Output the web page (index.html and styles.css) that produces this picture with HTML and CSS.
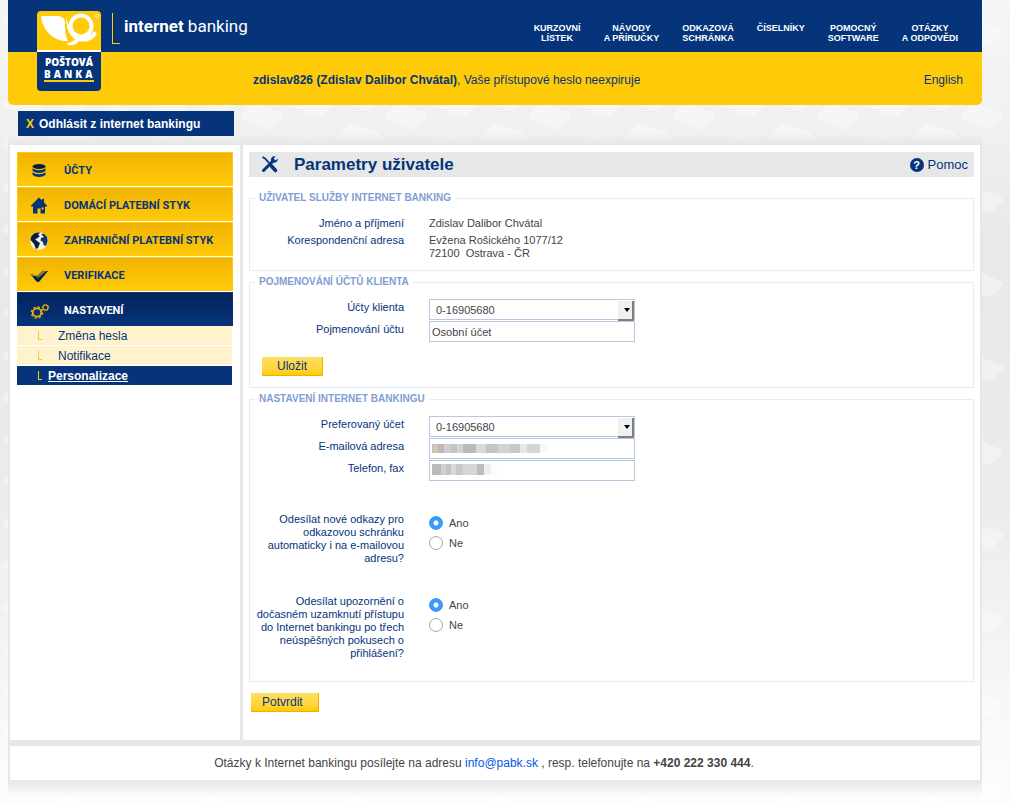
FILE: index.html
```html
<!DOCTYPE html>
<html lang="cs">
<head>
<meta charset="utf-8">
<title>Internet banking – Parametry uživatele</title>
<link rel="stylesheet" href="styles.css">
</head>
<body>
<svg class="backdrop" aria-hidden="true">
  <defs>
    <pattern id="tiles" width="144" height="84" patternUnits="userSpaceOnUse">
      <g fill="#fff" fill-opacity=".34">
        <rect x="-17" y="-10" width="34" height="20" rx="5" transform="translate(24 20) rotate(22) skewX(-24)"/>
        <rect x="-17" y="-10" width="34" height="20" rx="5" transform="translate(72 14) rotate(22) skewX(-24)"/>
        <rect x="-17" y="-10" width="34" height="20" rx="5" transform="translate(118 32) rotate(22) skewX(-24)"/>
        <rect x="-17" y="-10" width="34" height="20" rx="5" transform="translate(72 52) rotate(22) skewX(-24)"/>
        <rect x="-17" y="-10" width="34" height="20" rx="5" transform="translate(24 62) rotate(22) skewX(-24)"/>
      </g>
    </pattern>
  </defs>
  <rect width="100%" height="100%" fill="url(#tiles)"/>
</svg>

<div class="page">
  <header class="header">
    <div class="header-top">
      <p class="brand"><b>internet</b> banking</p>
      <nav class="top-nav">
        <a href="#">KURZOVNÍ<br>LÍSTEK</a>
        <a href="#">NÁVODY<br>A PŘÍRUČKY</a>
        <a href="#">ODKAZOVÁ<br>SCHRÁNKA</a>
        <a href="#">ČÍSELNÍKY</a>
        <a href="#">POMOCNÝ<br>SOFTWARE</a>
        <a href="#">OTÁZKY<br>A ODPOVĚDI</a>
      </nav>
    </div>
    <div class="header-user">
      <p><b>zdislav826 (Zdislav Dalibor Chvátal)</b>, Vaše přístupové heslo neexpiruje</p>
      <a href="#">English</a>
    </div>
    <a class="logo" href="#">
      <svg class="logo-horn" viewBox="0 0 64 39" aria-hidden="true">
        <path d="M4 5H20C24 5 27 7 28 10 28 17 28 24 31 30 17 31 5 19 4 5Z" fill="#fff"/>
        <circle cx="44" cy="15" r="10.500" fill="none" stroke="#fff" stroke-width="4"/>
        <path d="M29 5C31 16 36 25 44 25.500 50 26 54 24 57 20L60 23C56 29 51 31 44 30.500 36 30 31 22 29.500 14Z" fill="#fff"/>
        <path d="M28 6C29 14 29 20 33 26" fill="none" stroke="#ffca08" stroke-width="1.200"/>
        <path d="M30 32C34 32 36 30 38 28.500L42 30C39 34 35 35 31 34Z" fill="#fff"/>
        <circle cx="60" cy="5" r="1.600" fill="none" stroke="#fff" stroke-width=".8"/>
      </svg>
      <span class="logo-name">POŠTOVÁ</span>
      <span class="logo-sub">BANKA</span>
    </a>
  </header>

  <div class="logout-row">
    <a class="logout" href="#"><span class="logout-x">X</span><span>Odhlásit z internet bankingu</span></a>
  </div>

  <div class="frame">
    <aside class="sidebar">
      <nav class="menu">
        <a class="menu-item" href="#">
          <svg viewBox="0 0 20 20" aria-hidden="true"><g fill="#05347b"><ellipse cx="9" cy="5.500" rx="6.500" ry="2.500" fill="#061c40"/><path d="M2.500 7.300C5 9.900 13 9.900 15.500 7.300V9.500C14 12.700 4 12.700 2.500 9.500Z"/><path d="M2.500 11.300C5 13.900 13 13.900 15.500 11.300V13.500C14 16.700 4 16.700 2.500 13.500Z"/></g></svg>
          <span>ÚČTY</span>
        </a>
        <a class="menu-item" href="#">
          <svg viewBox="0 0 20 20" aria-hidden="true"><path d="M9 1.500L12 4.500V3H14V6.500L17 9.500V10.500H15V17.500H10.500V12.500H7.500V17.500H3V10.500H1V9.500Z" fill="#05347b"/><path d="M11.500 11.500h2v2h-2z" fill="#ffca08"/></svg>
          <span>DOMÁCÍ PLATEBNÍ STYK</span>
        </a>
        <a class="menu-item" href="#">
          <svg viewBox="0 0 20 20" aria-hidden="true"><circle cx="9" cy="10" r="8.800" fill="#f7f3df"/><path d="M1 6C3 2 7 1 10 1.500L8 4 10 5 7 7.500 5 8 7 10 10 12 8 17 6 18 4 13 .5 9Z" fill="#061c40"/><path d="M11 3L14 2.800 17 6 17.700 10 16 15 13.500 14 13 11 10.500 9.500 11 7 14 6Z" fill="#05347b"/></svg>
          <span>ZAHRANIČNÍ PLATEBNÍ STYK</span>
        </a>
        <a class="menu-item" href="#">
          <svg viewBox="0 0 20 20" aria-hidden="true"><path d="M0 8L3 8 5 11 13 4.500 15 5 6 15Z" fill="#8c7420"/><path d="M2.500 10.500L5.500 9.500 8 12 16 5H18L9 16H7Z" fill="#062452"/></svg>
          <span>VERIFIKACE</span>
        </a>
        <a class="menu-item menu-item-active" href="#">
          <svg viewBox="0 0 20 20" aria-hidden="true"><g fill="none" stroke="#eab010"><circle cx="7" cy="11.500" r="4.200" stroke-width="1.800"/><circle cx="7" cy="11.500" r="5.600" stroke-width="1.400" stroke-dasharray="2.200 2.198"/><circle cx="15.500" cy="6.500" r="2.500" stroke-width="1.200"/><circle cx="15.500" cy="6.500" r="3.300" stroke-width=".8" stroke-dasharray="1.300 1.292"/></g></svg>
          <span>NASTAVENÍ</span>
        </a>
      </nav>
      <nav class="submenu">
        <a href="#">Změna hesla</a>
        <a href="#">Notifikace</a>
        <a class="submenu-active" href="#">Personalizace</a>
      </nav>
    </aside>

    <main class="content">
      <div class="title-bar">
        <svg class="title-icon" viewBox="0 0 20 20" aria-hidden="true"><path d="M2.500 2L5 3.500 11 10" fill="none" stroke="#05347b" stroke-width="1.800"/><path d="M11 10.500L15.500 15.500" fill="none" stroke="#05347b" stroke-width="3.600" stroke-linecap="round"/><path d="M3.500 15.500L12.500 6.500" fill="none" stroke="#05347b" stroke-width="3" stroke-linecap="round"/><path d="M15.500 1C11.500 1 10 4 11.500 7.500 15 8.500 18 7 18 3.500L15.500 5.500 13.800 3.800Z" fill="#05347b"/></svg>
        <h1>Parametry uživatele</h1>
        <a class="help" href="#"><span class="help-mark">?</span>Pomoc</a>
      </div>

      <form>
        <fieldset>
          <legend>UŽIVATEL SLUŽBY INTERNET BANKING</legend>
          <dl class="facts">
            <dt>Jméno a příjmení</dt>
            <dd>Zdislav Dalibor Chvátal</dd>
            <dt>Korespondenční adresa</dt>
            <dd>Evžena Rošického 1077/12<br>72100&nbsp; Ostrava - ČR</dd>
          </dl>
        </fieldset>

        <fieldset>
          <legend>POJMENOVÁNÍ ÚČTŮ KLIENTA</legend>
          <div class="fields">
            <label for="account">Účty klienta</label>
            <div class="select"><select id="account"><option>0-16905680</option></select></div>
            <label for="account-name">Pojmenování účtu</label>
            <input class="text" id="account-name" type="text" value="Osobní účet">
          </div>
          <button class="button button-save" type="button">Uložit</button>
        </fieldset>

        <fieldset class="settings">
          <legend>NASTAVENÍ INTERNET BANKINGU</legend>
          <div class="fields">
            <label for="preferred">Preferovaný účet</label>
            <div class="select"><select id="preferred"><option>0-16905680</option></select></div>
            <label for="email">E-mailová adresa</label>
            <input class="text masked masked-email" id="email" type="text">
            <label for="phone">Telefon, fax</label>
            <input class="text masked masked-phone" id="phone" type="text">
          </div>
          <div class="choice" role="radiogroup" aria-labelledby="q-links">
            <p id="q-links">Odesílat nové odkazy pro odkazovou schránku automaticky i na e-mailovou adresu?</p>
            <div>
              <label><input type="radio" name="links" checked>Ano</label>
              <label><input type="radio" name="links">Ne</label>
            </div>
          </div>
          <div class="choice" role="radiogroup" aria-labelledby="q-lock">
            <p id="q-lock">Odesílat upozornění o dočasném uzamknutí přístupu do Internet bankingu po třech neúspěšných pokusech o přihlášení?</p>
            <div>
              <label><input type="radio" name="lock" checked>Ano</label>
              <label><input type="radio" name="lock">Ne</label>
            </div>
          </div>
        </fieldset>
        <button class="button button-submit" type="button">Potvrdit</button>
      </form>
    </main>
  </div>

  <footer class="footer">
    <p>Otázky k Internet bankingu posílejte na adresu <a href="#">info@pabk.sk</a> , resp. telefonujte na <b>+420 222 330 444</b>.</p>
  </footer>
  <div class="shadow"></div>
</div>
</body>
</html>
```
FILE: styles.css
```css
:root {
  --blue: #05347b;
  --yellow: #ffca08;
  --grey: #e7e7e7;
  --line: #e3edfa;
  --text: #444;
}

* { box-sizing: border-box; }

body {
  margin: 0;
  min-height: 100vh;
  background: linear-gradient(#f6f6f6, #f1f1f1 14%, #e9e9e9 30%, #ebebeb 60%, #f6f6f6 85%, #fdfdfd);
  color: var(--text);
  font: 12px/14px "Liberation Sans", Arial, sans-serif;
}

p, h1, dl, dd { margin: 0; }
a { color: inherit; text-decoration: none; }

.backdrop {
  position: absolute;
  inset: 0;
  z-index: -1;
  width: 100%;
  height: 100%;
}

.page { margin: 0 28px 0 8px; }

/* Header */
.header {
  position: relative;
  overflow: hidden;
  border-radius: 0 0 5px 5px;
  background: var(--yellow);
  color: var(--blue);
}

.header-top {
  display: flex;
  justify-content: space-between;
  align-items: flex-start;
  min-height: 52px;
  padding: 13px 24px 0 104px;
  background: var(--blue);
  color: #fff;
}

.brand {
  height: 31px;
  padding-left: 11px;
  border-left: 1px solid var(--yellow);
  background: linear-gradient(var(--yellow), var(--yellow)) 0 100% / 7px 1px no-repeat;
  font: 17px/26px Roboto, "Open Sans", sans-serif;
}

.top-nav {
  display: flex;
  gap: 23px;
  padding-top: 10px;
  font-size: 9px;
  font-weight: bold;
  line-height: 10px;
  text-align: center;
}

.header-user {
  display: flex;
  justify-content: space-between;
  align-items: center;
  min-height: 53px;
  padding: 2px 19px 0 245px;
}

.logo {
  position: absolute;
  left: 29px;
  top: 11px;
  display: flex;
  flex-direction: column;
  align-items: center;
  width: 64px;
  height: 80px;
  overflow: hidden;
  border-radius: 4px;
  background: var(--blue);
  color: #fff;
  font: 800 10px/12px "Open Sans", "Noto Sans", sans-serif;
}

.logo-horn {
  flex: none;
  width: 64px;
  height: 41px;
  margin-bottom: 4px;
  border-bottom: 2px solid #fff;
  background: var(--yellow);
}

.logo-sub {
  width: 50px;
  border-bottom: 2px solid var(--yellow);
  letter-spacing: 3px;
}

/* Logout strip */
.logout-row {
  padding: 6px 10px 9px;
  background: linear-gradient(transparent 70%, var(--grey));
}

.logout {
  display: flex;
  gap: 5px;
  width: 216px;
  padding: 6px 8px 5px;
  background: var(--blue);
  color: #fff;
  font-weight: bold;
}

.logout-x { color: var(--yellow); }

/* Body frame */
.frame {
  display: flex;
  gap: 3px;
  padding: 0 2px 6px;
  background: var(--grey);
}

.sidebar {
  flex: 0 0 230px;
  padding: 7px;
  background: #fff;
}

.menu {
  display: flex;
  flex-direction: column;
  gap: 1px;
}

.menu-item {
  display: flex;
  align-items: center;
  gap: 14px;
  height: 34px;
  padding: 3px 12px 0;
  border: 1px solid var(--yellow);
  background: linear-gradient(#f1b302, var(--yellow));
  color: var(--blue);
  font: bold 11px/14px Roboto, "Liberation Sans", sans-serif;
}

.menu-item svg {
  width: 20px;
  height: 20px;
}

.menu-item-active {
  border-color: var(--blue);
  background: linear-gradient(#04235a, var(--blue));
  color: #fff;
}

.submenu {
  display: flex;
  flex-direction: column;
  gap: 1px;
  margin-right: 1px;
}

.submenu a {
  display: flex;
  align-items: center;
  height: 19px;
  padding-left: 21px;
  background: #fff3cd;
  color: var(--blue);
}

.submenu a::before {
  content: "";
  width: 3px;
  height: 8px;
  margin-right: 16px;
  border: solid var(--yellow);
  border-width: 0 0 1px 1px;
}

.submenu .submenu-active {
  background: var(--blue);
  color: #fff;
  font-weight: bold;
  text-decoration: underline;
}

.submenu .submenu-active::before { margin-right: 6px; }

.content {
  flex: 1;
  min-width: 0;
  padding: 7px 6px 28px;
  background: #fff;
}

.title-bar {
  display: flex;
  align-items: center;
  height: 25px;
  margin-bottom: 15px;
  padding: 0 6px 0 11px;
  background: var(--grey);
  color: var(--blue);
}

.title-icon {
  width: 20px;
  height: 20px;
  margin-right: 14px;
}

.title-bar h1 {
  flex: 1;
  font-size: 17px;
  line-height: 20px;
}

.help {
  display: flex;
  align-items: center;
  gap: 4px;
  padding-top: 1px;
  font-size: 13px;
}

.help-mark {
  width: 14px;
  height: 14px;
  border-radius: 50%;
  background: var(--blue);
  color: #fff;
  font-size: 11px;
  font-weight: bold;
  text-align: center;
}

/* Form */
fieldset {
  min-width: 0;
  margin: 0 0 5px;
  padding: 0 0 10px;
  border: 1px solid var(--line);
  font-size: 11px;
  line-height: 13px;
}

legend {
  margin-left: 5px;
  padding: 0 4px;
  color: #809ed3;
  font-size: 10px;
  font-weight: bold;
  line-height: 12px;
}

.facts, .fields, .choice {
  display: grid;
  grid-template-columns: 154px 206px;
  column-gap: 25px;
}

.facts {
  row-gap: 4px;
  padding-top: 13px;
}

.facts dt, .fields > label, .choice p {
  color: var(--blue);
  text-align: right;
}

.fields {
  row-gap: 1px;
  padding-top: 11px;
}

.fields > label { padding-top: 2px; }

.text, .select select {
  width: 100%;
  height: 21px;
  margin: 0;
  padding: 1px 2px 0;
  border: 1px solid #b5c9e4;
  border-radius: 0;
  background: #fff;
  color: var(--text);
  font: 11px/13px "Liberation Sans", Arial, sans-serif;
}

.select { position: relative; }

.select select {
  display: block;
  appearance: none;
  padding-left: 6px;
}

.select::before {
  content: "";
  position: absolute;
  top: 2px;
  right: 1px;
  width: 14px;
  height: 18px;
  border: solid #808080;
  border-width: 0 2px 2px 0;
  background: #f0f0f0;
  pointer-events: none;
}

.select::after {
  content: "";
  position: absolute;
  top: 9px;
  right: 5px;
  border: solid transparent;
  border-width: 4px 3px 0;
  border-top-color: #000;
  pointer-events: none;
}

.masked {
  background-repeat: no-repeat;
  background-position: 2px 5px;
}

.masked-email {
  background-image: linear-gradient(90deg, #f2b25f 1px, #c8c8c8 1px 6px, #bbb 6px 12px, #cfcfcf 12px 19px, #c5c5c5 19px 25px, #d2d2d2 25px 31px, #bababa 31px 44px, #d8d8d8 44px 54px, #c5c5c5 54px 66px, #d2d2d2 66px 78px, #c8c8c8 78px 88px, #e8e8e8 88px 95px, #d5d5d5 95px 108px, #f8f8f8 108px);
  background-size: 116px 9px;
}

.masked-phone {
  background-image: linear-gradient(90deg, #bbb 9px, #d0d0d0 9px 14px, #c3c3c3 14px 19px, #d8d8d8 19px 24px, #c8c8c8 24px 31px, #d5d5d5 31px 45px, #bcbcbc 45px 52px, #eee 52px 59px, #fbfbfb 59px);
  background-size: 65px 11px;
  background-position: 2px 3px;
}

.button {
  display: block;
  height: 19px;
  padding: 1px 15px 0;
  border: solid #e9b400;
  border-width: 0 1px 1px 0;
  background: linear-gradient(#ffdf62, #ffd640 60%, #ffca08);
  color: var(--blue);
  font: 12px/17px "Liberation Sans", Arial, sans-serif;
}

.button-save { margin: 15px 0 1px 12px; }

.button-submit {
  margin: 11px 0 0 2px;
  padding-left: 11px;
}

.settings { padding-bottom: 21px; }

.choice { padding-top: 30px; }
.fields + .choice { padding-top: 32px; }

.choice label {
  display: flex;
  align-items: center;
  gap: 6px;
  height: 20px;
}

.choice input {
  appearance: none;
  width: 14px;
  height: 14px;
  margin: 0;
  border: 1px solid #a9a9a9;
  border-radius: 50%;
  background: #fff;
}

.choice input:checked {
  border-color: #3b99fc;
  background: radial-gradient(circle, #fff 2px, #3b99fc 3px);
}

/* Footer */
.footer {
  padding: 0 2px;
  background: var(--grey);
}

.footer p {
  padding: 10px 22px 10px 0;
  background: #fff;
  text-align: center;
}

.footer a { color: #0057e7; }

.shadow {
  height: 17px;
  background: linear-gradient(var(--grey), transparent);
}
```
